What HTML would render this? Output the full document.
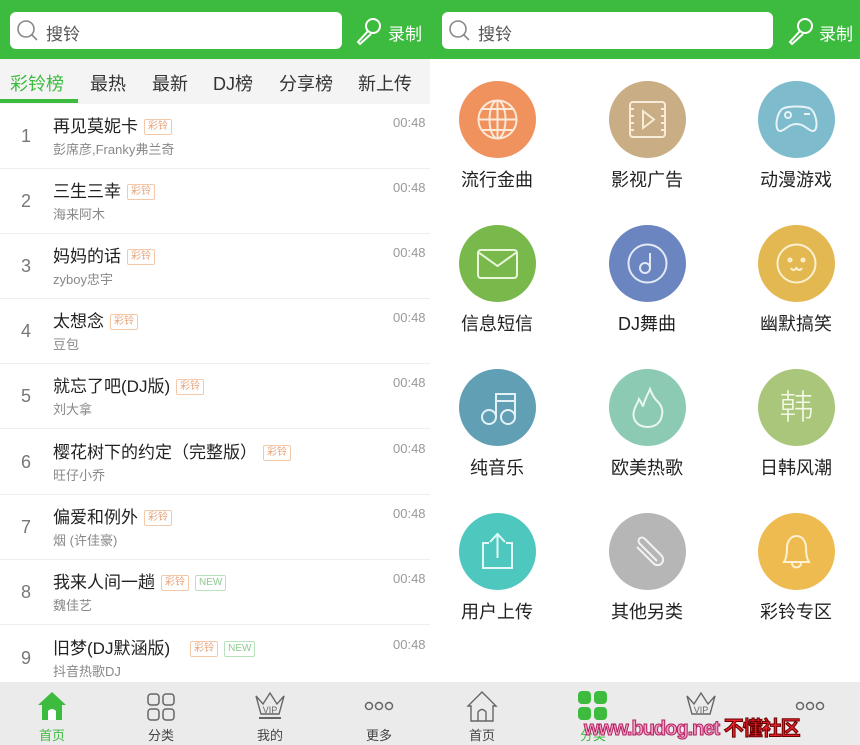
<!DOCTYPE html><html><head><meta charset="utf-8"><style>
*{margin:0;padding:0;box-sizing:border-box}
body{width:860px;height:745px;overflow:hidden;background:#fff;font-family:"Liberation Sans","Noto Sans CJK SC",sans-serif;position:relative}
.a{position:absolute}
.top{left:0;top:0;width:860px;height:59px;background:#3dbb3f}
.sb{top:12px;height:37px;background:#fff;border-radius:6px}
.st{font-size:17px;color:#555;top:20px}
.rec{color:#fff;font-size:17px;top:20px}
.tabs{left:0;top:59px;width:430px;height:45px;background:#f4f4f4}
.tab{top:70px;font-size:18px;color:#333}
.row{left:0;width:430px;height:65px;border-bottom:1px solid #eee}
.num{left:14px;width:24px;text-align:center;font-size:18px;color:#777;top:22px}
.ti{left:53px;top:8px;font-size:17px;color:#222;white-space:nowrap}
.sub{left:53px;top:35px;font-size:13px;color:#888}
.tm{left:393px;top:11px;font-size:13px;color:#999}
.tag{display:inline-block;font-size:10px;border:1px solid #f3c9a8;color:#e9a27a;padding:0 3px;line-height:14px;margin-left:6px;vertical-align:3px;border-radius:2px}
.new{border-color:#b8e2bb;color:#8bcb8f}
.c{width:77px;height:77px;border-radius:50%}
.c svg{width:77px;height:77px}
.lb{font-size:18px;color:#222;width:120px;text-align:center}
.nav{left:0;top:682px;width:860px;height:63px;background:#ebebeb}
.nl{font-size:13px;color:#444;top:725px;width:60px;text-align:center}
</style></head><body>
<div class="a top"></div>
<div class="a sb" style="left:10px;width:332px"></div>
<div class="a sb" style="left:442px;width:331px"></div>
<svg class="a" style="left:16px;top:19px" width="24" height="24"><circle cx="10" cy="10" r="8" fill="none" stroke="#888" stroke-width="1.6"/><line x1="16" y1="16" x2="21" y2="21" stroke="#888" stroke-width="1.6"/></svg>
<div class="a st" style="left:46px">搜铃</div>
<svg class="a" style="left:448px;top:19px" width="24" height="24"><circle cx="10" cy="10" r="8" fill="none" stroke="#888" stroke-width="1.6"/><line x1="16" y1="16" x2="21" y2="21" stroke="#888" stroke-width="1.6"/></svg>
<div class="a st" style="left:478px">搜铃</div>
<svg class="a" style="left:354px;top:16px" width="30" height="30"><circle cx="19" cy="10" r="7" fill="none" stroke="#fff" stroke-width="2"/><path d="M14 15 L4 26 L6 28 L17 18" fill="none" stroke="#fff" stroke-width="2"/></svg>
<div class="a rec" style="left:388px">录制</div>
<svg class="a" style="left:786px;top:16px" width="30" height="30"><circle cx="19" cy="10" r="7" fill="none" stroke="#fff" stroke-width="2"/><path d="M14 15 L4 26 L6 28 L17 18" fill="none" stroke="#fff" stroke-width="2"/></svg>
<div class="a rec" style="left:819px">录制</div>

<div class="a tabs"></div>
<div class="a tab" style="left:10px;color:#3dbb3f">彩铃榜</div>
<div class="a tab" style="left:90px">最热</div>
<div class="a tab" style="left:152px">最新</div>
<div class="a tab" style="left:213px">DJ榜</div>
<div class="a tab" style="left:279px">分享榜</div>
<div class="a tab" style="left:358px">新上传</div>
<div class="a" style="left:0;top:99px;width:78px;height:4px;background:#3dbb3f"></div>

<div class="a row" style="top:104px"><div class="a num">1</div><div class="a ti">再见莫妮卡<span class="tag">彩铃</span></div><div class="a sub">彭席彦,Franky弗兰奇</div><div class="a tm">00:48</div></div>
<div class="a row" style="top:169px"><div class="a num">2</div><div class="a ti">三生三幸<span class="tag">彩铃</span></div><div class="a sub">海来阿木</div><div class="a tm">00:48</div></div>
<div class="a row" style="top:234px"><div class="a num">3</div><div class="a ti">妈妈的话<span class="tag">彩铃</span></div><div class="a sub">zyboy忠宇</div><div class="a tm">00:48</div></div>
<div class="a row" style="top:299px"><div class="a num">4</div><div class="a ti">太想念<span class="tag">彩铃</span></div><div class="a sub">豆包</div><div class="a tm">00:48</div></div>
<div class="a row" style="top:364px"><div class="a num">5</div><div class="a ti">就忘了吧(DJ版)<span class="tag">彩铃</span></div><div class="a sub">刘大拿</div><div class="a tm">00:48</div></div>
<div class="a row" style="top:430px"><div class="a num">6</div><div class="a ti">樱花树下的约定（完整版）<span class="tag">彩铃</span></div><div class="a sub">旺仔小乔</div><div class="a tm">00:48</div></div>
<div class="a row" style="top:495px"><div class="a num">7</div><div class="a ti">偏爱和例外<span class="tag">彩铃</span></div><div class="a sub">烟 (许佳豪)</div><div class="a tm">00:48</div></div>
<div class="a row" style="top:560px"><div class="a num">8</div><div class="a ti">我来人间一趟<span class="tag">彩铃</span><span class="tag new">NEW</span></div><div class="a sub">魏佳艺</div><div class="a tm">00:48</div></div>
<div class="a row" style="top:626px"><div class="a num">9</div><div class="a ti">旧梦(DJ默涵版)<span class="tag" style="margin-left:20px">彩铃</span><span class="tag new">NEW</span></div><div class="a sub">抖音热歌DJ</div><div class="a tm">00:48</div></div>

<div class="a c" style="left:459px;top:81px;background:#f0925e"><svg viewBox="0 0 77 77" fill="none" stroke="#fbe8d6" stroke-width="2"><circle cx="38.5" cy="38.5" r="19"/><ellipse cx="38.5" cy="38.5" rx="8" ry="19"/><line x1="19.5" y1="38.5" x2="57.5" y2="38.5"/><line x1="38.5" y1="19.5" x2="38.5" y2="57.5"/><line x1="23" y1="28" x2="54" y2="28"/><line x1="23" y1="49" x2="54" y2="49"/></svg></div>
<div class="a c" style="left:609px;top:81px;background:#c8ad85"><svg viewBox="0 0 77 77" fill="none" stroke="#f6ecd8" stroke-width="2"><rect x="21" y="21" width="35" height="35" rx="3"/><path d="M34 30 L45 38.5 L34 47 Z"/><path d="M21 28h4M21 35h4M21 42h4M21 49h4M52 28h4M52 35h4M52 42h4M52 49h4"/></svg></div>
<div class="a c" style="left:758px;top:81px;background:#7ebbcc"><svg viewBox="0 0 77 77" fill="none" stroke="#e6f3f7" stroke-width="2"><path d="M22 50 C16 50 18 30 26 27 C32 25 45 25 51 27 C59 30 61 50 55 50 C50 50 47 43 38.5 43 C30 43 27 50 22 50Z"/><circle cx="30" cy="34" r="3"/><path d="M46 33h6"/></svg></div>
<div class="a c" style="left:459px;top:225px;background:#79b94b"><svg viewBox="0 0 77 77" fill="none" stroke="#eaf6dc" stroke-width="2"><rect x="19" y="25" width="39" height="28" rx="3"/><path d="M19 27 L38.5 41 L58 27"/></svg></div>
<div class="a c" style="left:609px;top:225px;background:#6a85bf"><svg viewBox="0 0 77 77" fill="none" stroke="#e3e9f6" stroke-width="2"><circle cx="38.5" cy="38.5" r="19"/><circle cx="36" cy="43" r="5"/><path d="M41 43 V28"/></svg></div>
<div class="a c" style="left:758px;top:225px;background:#e3b850"><svg viewBox="0 0 77 77" fill="none" stroke="#fbf0d2" stroke-width="2"><circle cx="38.5" cy="38.5" r="19"/><circle cx="32" cy="35" r="1.5"/><circle cx="45" cy="35" r="1.5"/><path d="M33 43 Q35.5 47 38.5 43 Q41.5 47 44 43"/></svg></div>
<div class="a c" style="left:459px;top:369px;background:#619fb5"><svg viewBox="0 0 77 77" fill="none" stroke="#e4f1f6" stroke-width="2"><circle cx="30" cy="48" r="7"/><circle cx="49" cy="48" r="7"/><path d="M37 48 V25 H56 V48 M37 32 H56"/></svg></div>
<div class="a c" style="left:609px;top:369px;background:#8dcab3"><svg viewBox="0 0 77 77" fill="none" stroke="#eaf7f1" stroke-width="2"><path d="M38.5 58 C27 58 23 49 25 42 C26 37 29 34 30 30 C33 34 33 37 34 37 C36 30 39 25 41 20 C44 28 47 31 50 34 C53 38 54 42 53 46 C52 53 47 58 38.5 58Z"/></svg></div>
<div class="a c" style="left:758px;top:369px;background:#a9c67a"><svg viewBox="0 0 77 77"><text x="38.5" y="50" text-anchor="middle" font-size="34" fill="#f4f9e8" font-family="Noto Sans CJK SC" font-weight="300">韩</text></svg></div>
<div class="a c" style="left:459px;top:513px;background:#4ec7bf"><svg viewBox="0 0 77 77" fill="none" stroke="#e2f8f6" stroke-width="2"><path d="M30 30 H24 V55 H53 V30 H47"/><path d="M38.5 45 V22 M31 29 L38.5 21 L46 29"/></svg></div>
<div class="a c" style="left:609px;top:513px;background:#b6b6b6"><svg viewBox="0 0 77 77" fill="none" stroke="#f2f2f2" stroke-width="2"><path d="M48 48 L31 31 C27 27 32 22 36 26 L52 42 C58 48 50 56 44 50 L28 34"/></svg></div>
<div class="a c" style="left:758px;top:513px;background:#eebb50"><svg viewBox="0 0 77 77" fill="none" stroke="#fdf1d4" stroke-width="2"><path d="M26 49 C28 46 29 42 29 35 C29 28 33 23 38.5 23 C44 23 48 28 48 35 C48 42 49 46 51 49 Z"/><path d="M34 50 C34 56 43 56 43 50"/></svg></div>
<div class="a lb" style="left:437px;top:166px">流行金曲</div>
<div class="a lb" style="left:587px;top:166px">影视广告</div>
<div class="a lb" style="left:736px;top:166px">动漫游戏</div>
<div class="a lb" style="left:437px;top:310px">信息短信</div>
<div class="a lb" style="left:587px;top:310px">DJ舞曲</div>
<div class="a lb" style="left:736px;top:310px">幽默搞笑</div>
<div class="a lb" style="left:437px;top:454px">纯音乐</div>
<div class="a lb" style="left:587px;top:454px">欧美热歌</div>
<div class="a lb" style="left:736px;top:454px">日韩风潮</div>
<div class="a lb" style="left:437px;top:598px">用户上传</div>
<div class="a lb" style="left:587px;top:598px">其他另类</div>
<div class="a lb" style="left:736px;top:598px">彩铃专区</div>

<div class="a nav"></div>
<svg class="a" style="left:36px;top:690px" width="32" height="32"><path d="M16 2 L30 15 H26 V30 H6 V15 H2 Z" fill="#3dbb3f"/><path d="M12 30 V21 Q16 17 20 21 V30" fill="#fff"/></svg>
<div class="a nl" style="left:22px;color:#3dbb3f">首页</div>
<svg class="a" style="left:146px;top:692px" width="30" height="30" fill="none" stroke="#666" stroke-width="1.5"><rect x="2" y="2" width="11" height="11" rx="3"/><rect x="17" y="2" width="11" height="11" rx="3"/><rect x="2" y="17" width="11" height="11" rx="3"/><rect x="17" y="17" width="11" height="11" rx="3"/></svg>
<div class="a nl" style="left:131px">分类</div>
<svg class="a" style="left:253px;top:690px" width="34" height="34" fill="none" stroke="#666" stroke-width="1.4"><path d="M3 6 L8 24 H26 L31 6 L24 14 L17 3 L10 14 Z"/><line x1="6" y1="28" x2="28" y2="28" stroke-width="2"/><text x="17" y="23" font-size="9" text-anchor="middle" fill="#666" stroke="none">VIP</text></svg>
<div class="a nl" style="left:240px">我的</div>
<svg class="a" style="left:364px;top:700px" width="30" height="12" fill="none" stroke="#666" stroke-width="1.5"><circle cx="5" cy="6" r="3.5"/><circle cx="15" cy="6" r="3.5"/><circle cx="25" cy="6" r="3.5"/></svg>
<div class="a nl" style="left:349px">更多</div>
<svg class="a" style="left:466px;top:690px" width="32" height="34" fill="none" stroke="#666" stroke-width="1.4"><path d="M16 2 L30 16 H27 V31 H5 V16 H2 Z"/><path d="M12 31 V22 Q16 17 20 22 V31"/></svg>
<div class="a nl" style="left:452px">首页</div>
<svg class="a" style="left:577px;top:690px" width="32" height="32" fill="#3dbb3f"><rect x="1" y="1" width="13" height="13" rx="4"/><rect x="17" y="1" width="13" height="13" rx="4"/><rect x="1" y="17" width="13" height="13" rx="4"/><rect x="17" y="17" width="13" height="13" rx="4"/></svg>
<div class="a nl" style="left:563px;color:#3dbb3f">分类</div>
<svg class="a" style="left:684px;top:690px" width="34" height="34" fill="none" stroke="#666" stroke-width="1.4"><path d="M3 6 L8 24 H26 L31 6 L24 14 L17 3 L10 14 Z"/><text x="17" y="23" font-size="9" text-anchor="middle" fill="#666" stroke="none">VIP</text></svg>
<svg class="a" style="left:795px;top:700px" width="30" height="12" fill="none" stroke="#666" stroke-width="1.5"><circle cx="5" cy="6" r="3.5"/><circle cx="15" cy="6" r="3.5"/><circle cx="25" cy="6" r="3.5"/></svg>
<div class="a" style="left:584px;top:712px;font-size:20px;font-weight:bold;color:#f7a0c8;-webkit-text-stroke:1px #b02060;letter-spacing:-1px;white-space:nowrap">www.budog.net <span style="color:#e8202a;-webkit-text-stroke:1px #600">不懂社区</span></div>
</body></html>
